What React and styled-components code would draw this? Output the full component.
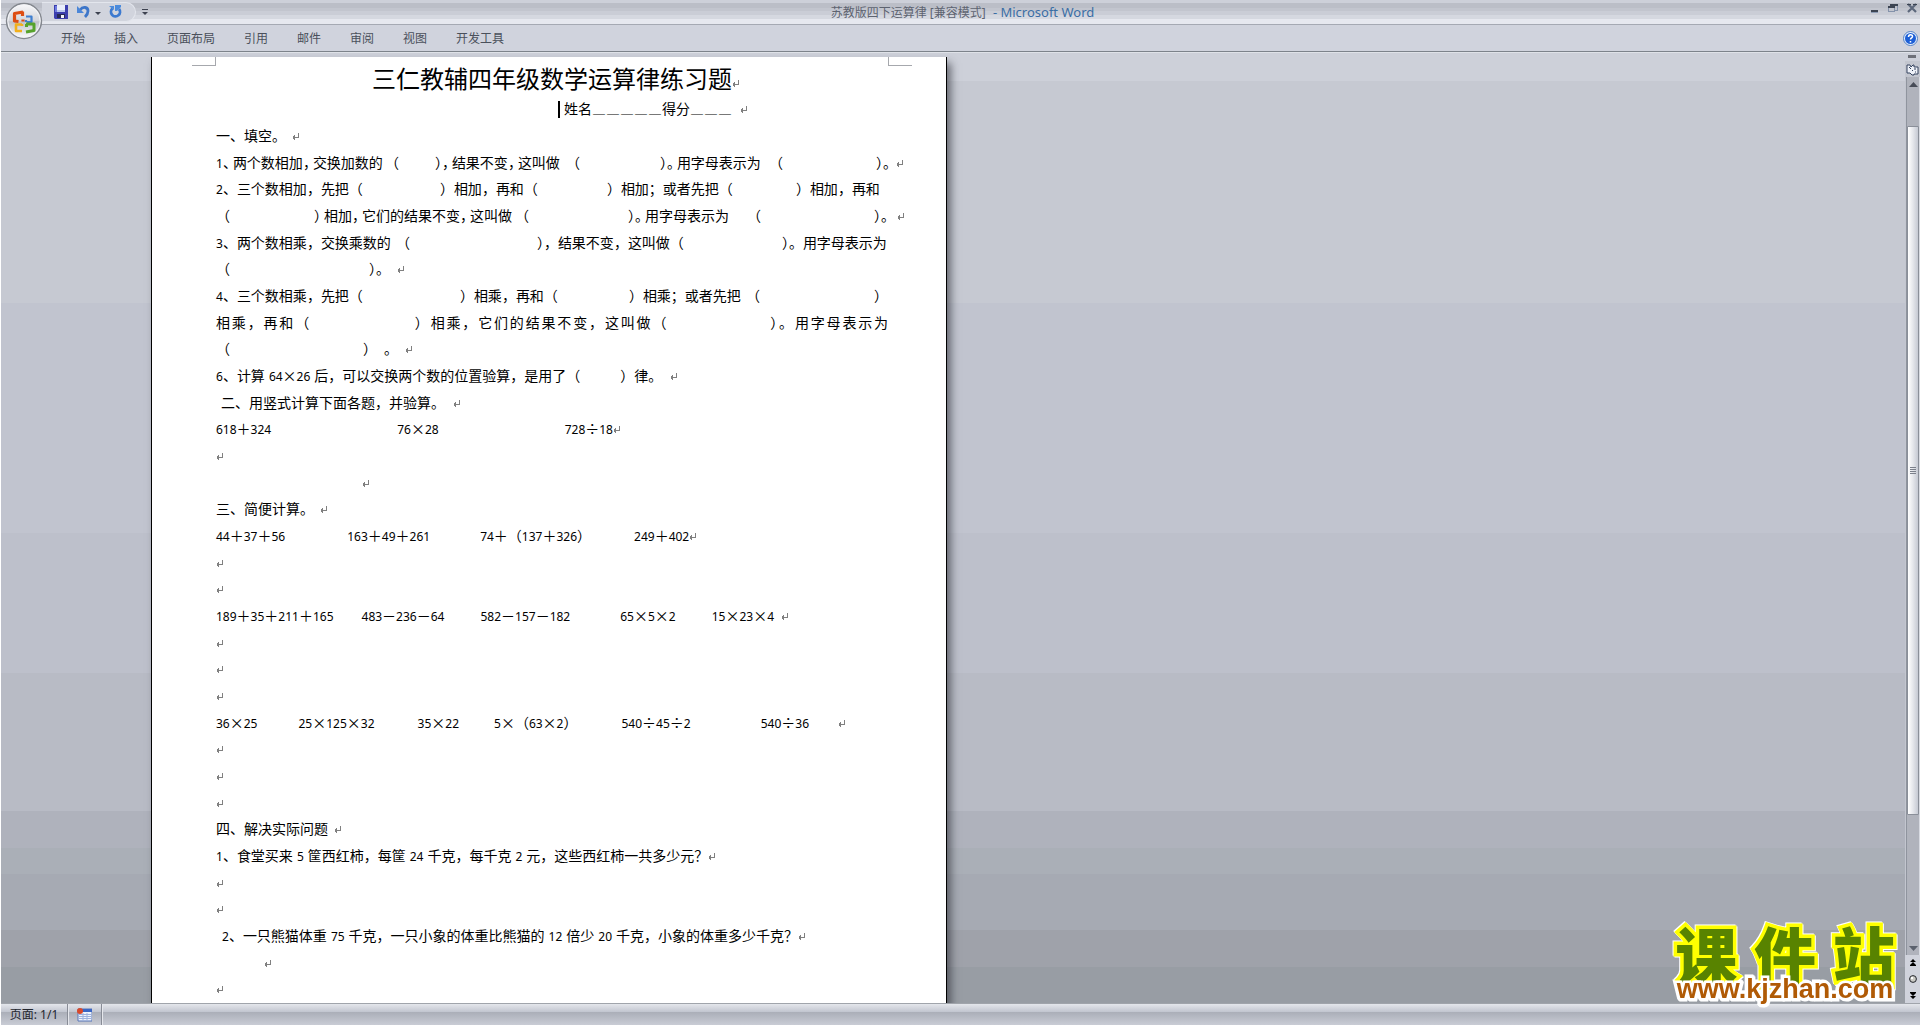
import styled, { createGlobalStyle, css } from "styled-components";

const GlobalStyle = createGlobalStyle`
  *, *::before, *::after {
    box-sizing: border-box;
  }

  body {
    margin: 0;
    overflow: hidden;
    background: #fff;
    font-family: "Noto Sans", "Noto Sans CJK SC", sans-serif;
    font-size: 12px;
  }

  button {
    border: none;
    background: none;
    padding: 0;
    font: inherit;
    color: inherit;
    display: flex;
    align-items: center;
    justify-content: center;
  }

  svg {
    display: block;
  }
`;

const Window = styled.div`
  height: 100vh;
  display: flex;
  flex-direction: column;
  border-left: 1px solid #fff;
  position: relative;
`;

/* ---------- title bar ---------- */

const TitleBar = styled.header`
  height: 25px;
  flex: none;
  display: grid;
  grid-template-columns: 1fr auto 1fr;
  align-items: start;
  border-bottom: 1px solid #a5a9b3;
  background: linear-gradient(
    #cdd0d9 0 3px,
    #bbbec7 3px 8px,
    #c2c5ce 8px 11px,
    #cacdd6 11px 15px,
    #d5d8e0 15px 19px,
    #e6e8ef 19px
  );
`;

const QuickAccess = styled.div`
  height: 23px;
  padding-left: 41px;
  display: flex;
  align-items: center;
`;

const Pill = styled.div`
  height: 20px;
  width: 94px;
  padding: 0 12px;
  display: flex;
  align-items: center;
  border: 1px solid #e3e6ed;
  border-left: none;
  border-radius: 0 10px 10px 0;
  background: #d1d4dd;

  button:nth-child(2) {
    margin-left: 9px;
  }

  button:nth-child(3) {
    margin-left: 5px;
  }

  button:nth-child(4) {
    margin-left: 8px;
  }
`;

const Customize = styled.button`
  margin-left: 6px;
`;

const WindowTitle = styled.div`
  padding-left: 4px;
  line-height: 24px;
  color: #5d6370;
  white-space: pre;

  span {
    margin-left: 4px;
    color: #3a6ea5;
    font-size: 13px;
  }
`;

const WindowButtons = styled.div`
  display: flex;
  justify-content: flex-end;
  gap: 9px;
  padding: 2px 3px 0 0;
`;

/* ---------- ribbon tabs ---------- */

const Orb = styled.button`
  position: absolute;
  left: 4px;
  top: 2px;
  z-index: 2;
`;

const TabBar = styled.nav`
  height: 27px;
  flex: none;
  display: flex;
  align-items: center;
  gap: 29px;
  padding: 0 2px 0 60px;
  background: #d0d3dd;
  border-bottom: 1px solid #7d838b;
  color: #4a505b;
`;

const HelpButton = styled.button`
  margin-left: auto;
`;

/* ---------- workspace ---------- */

const Workspace = styled.main`
  flex: 1;
  min-height: 0;
  display: flex;
  border-top: 1px solid #dfe2e8;
  background: linear-gradient(
    #cdd0d9 0 28px,
    #c6c9d2 28px 250px,
    #c1c4cf 250px 480px,
    #bdc0cb 480px 620px,
    #b8bbc5 620px 758px,
    #afb2bc 758px 795px,
    #aaafb7 795px 821px,
    #a6aab3 821px 877px,
    #9fa2aa 877px 914px,
    #989da4 914px
  );
`;

const Canvas = styled.div`
  flex: 1;
  min-width: 0;
  overflow: hidden;
  padding: 4px 0 0 150px;
`;

const Page = styled.article`
  width: 796px;
  height: 100%;
  background: #fff;
  border: solid #000;
  border-width: 0 1px;
  box-shadow: 4px 6px 8px rgba(40, 42, 50, 0.6);
  color: #000;
  overflow: hidden;
`;

const Corners = styled.div`
  display: flex;
  justify-content: space-between;
  padding: 0 34px 0 40px;
`;

const Corner = styled.i`
  width: 24px;
  height: 9px;
  border-bottom: 1px solid #a6a8ad;
  border-left: ${(p) => (p.$side === "right" ? "1px solid #a6a8ad" : "none")};
  border-right: ${(p) => (p.$side === "left" ? "1px solid #a6a8ad" : "none")};
`;

const Body = styled.div`
  padding: 0 58px 0 64px;
  font-family: "Noto Sans CJK SC", sans-serif;
  font-size: 14px;
  text-spacing-trim: space-all;
`;

const DocTitle = styled.h1`
  margin: 0;
  height: 29px;
  padding-left: 156px;
  font-size: 24px;
  font-weight: 400;
  line-height: 24px;
  white-space: nowrap;
`;

const Line = styled.p`
  margin: 0;
  height: 27px;
  line-height: 27px;
  white-space: nowrap;

  &:nth-of-type(3n) {
    height: 26px;
    line-height: 26px;
  }

  ${(p) =>
    p.$justify &&
    css`
      white-space: normal;
      text-align-last: justify;
    `}
`;

const Digits = styled.span`
  font-family: "Noto Sans", sans-serif;
  font-size: 12px;
`;

const Glyph = styled.span`
  display: inline-block;
  width: ${(p) => p.$w}px;
  text-align: ${(p) => (p.$center ? "center" : "left")};
  text-align-last: auto;
  font-size: ${(p) => (p.$rule ? 12 : 14)}px;
  font-weight: ${(p) => (p.$rule ? 700 : 400)};
  font-feature-settings: ${(p) => (p.$half ? '"halt"' : "normal")};
  line-height: 20px;
  white-space: nowrap;
`;

const Blank = styled.span`
  display: inline-block;
  width: ${(p) => p.$w}px;
`;

const Caret = styled.span`
  display: inline-block;
  width: 2px;
  height: 17px;
  margin-right: 4px;
  vertical-align: -4px;
  background: #000;
`;

const MarkIcon = styled.svg`
  display: inline-block;
  vertical-align: 0;
`;

/* ---------- scroll bar ---------- */

const ScrollBar = styled.aside`
  width: 15px;
  flex: none;
  display: flex;
  flex-direction: column;
  background: #c3c6cf;
`;

const Splitter = styled.div`
  height: 8px;
  padding: 2px 3px;
  background: #cdd0d9;

  &::before {
    content: "";
    display: block;
    width: 8px;
    height: 3px;
    background: #6d7078;
  }
`;

const RulerButton = styled.button`
  height: 16px;
`;

const Track = styled.div`
  flex: 1;
  margin-left: 1px;
  display: flex;
  flex-direction: column;
  border-left: 1px solid #8f949e;
  border-right: 1px solid #d8dbe2;
  background: #b0b3bc;

  & > button {
    height: 14px;
  }
`;

const Rail = styled.div`
  flex: 1;
  display: flex;
  flex-direction: column;
  padding: 35px 0 126px;
`;

const Thumb = styled.div`
  flex: 1;
  display: flex;
  align-items: center;
  justify-content: center;
  border: 1px solid #8a8f99;
  border-radius: 1px;
  background: linear-gradient(90deg, #fff, #e4e6eb 50%, #c5c9d3);
`;

const BrowseButtons = styled.div`
  height: 48px;
  display: flex;
  flex-direction: column;
  justify-content: space-around;
  align-items: center;
  background: #d0d3dc;
`;

/* ---------- status bar ---------- */

const StatusBar = styled.footer`
  height: 22px;
  flex: none;
  display: flex;
  align-items: stretch;
  border-top: 1px solid #a0a4ab;
  color: #23262e;
  background: linear-gradient(#e4e6eb, #c1c5cf 8px, #aaaeb8 8px, #c9ccd5);
`;

const StatusCell = styled.div`
  width: ${(p) => p.$w}px;
  display: flex;
  align-items: center;
  justify-content: center;
  line-height: 18px;
  border-right: 1px solid #888c96;
  box-shadow: 1px 0 #e5e7ec;
`;

/* ---------- watermark ---------- */

const Watermark = styled.div`
  position: absolute;
  right: 17px;
  bottom: 22px;
  width: 236px;
  font-weight: 900;
  text-align: center;
  paint-order: stroke fill;
  filter: drop-shadow(1px 1px 0 #fff) drop-shadow(-1px -1px 0 #fff);
`;

const SiteName = styled.div`
  display: flex;
  justify-content: space-around;
  font-family: "Noto Sans CJK SC", sans-serif;
  font-size: 62px;
  line-height: 44px;
  color: #588300;
  -webkit-text-stroke: 7px #ff0;
`;

const SiteUrl = styled.div`
  font-family: "Liberation Sans", sans-serif;
  font-size: 27px;
  line-height: 28px;
  color: #b05a05;
  -webkit-text-stroke: 5px #fff;
`;

/* Numbers are blanks in pixels, "¶" is a paragraph mark, "|" the caret. */
const lines = [
  { parts: [342, "|", "姓名＿＿＿＿＿得分＿＿＿", 8, "¶"] },
  { parts: ["一、填空。", 6, "¶"] },
  {
    tight: true,
    parts: ["1、两个数相加，交换加数的", 2, "（", 36, "），结果不变，这叫做", 6, "（", 80, "）。用字母表示为", 8, "（", 93, "）。", 3, "¶"],
  },
  { parts: ["2、三个数相加，先把（", 77, "）相加，再和（", 69, "）相加；或者先把（", 63, "）相加，再和"] },
  {
    tight: true,
    parts: ["（", 84, "）相加，它们的结果不变，这叫做", 3, "（", 99, "）。用字母表示为", 18, "（", 113, "）。", 6, "¶"],
  },
  { parts: ["3、两个数相乘，交换乘数的", 5, "（", 127, "），结果不变，这叫做（", 98, "）。用字母表示为"] },
  { parts: ["（", 139, "）。", 7, "¶"] },
  { parts: ["4、三个数相乘，先把（", 97, "）相乘，再和（", 71, "）相乘；或者先把", 5, "（", 114, "）"] },
  { justify: true, parts: ["相乘，再和（", 102, "）相乘，它们的结果不变，这叫做（", 102, "）。用字母表示为"] },
  { parts: ["（", 133, "）", 7, "。", 7, "¶"] },
  { parts: ["6、计算", 4, "64×26", 4, "后，可以交换两个数的位置验算，是用了（", 40, "）律。", 8, "¶"] },
  { parts: [5, "二、用竖式计算下面各题，并验算。", 8, "¶"] },
  { parts: ["618＋324", 126, "76×28", 126, "728÷18¶"] },
  { parts: ["¶"] },
  { parts: [146, "¶"] },
  { parts: ["三、简便计算。", 6, "¶"] },
  { parts: ["44＋37＋56", 62, "163＋49＋261", 50, "74＋（137＋326）", 43, "249＋402¶"] },
  { parts: ["¶"] },
  { parts: ["¶"] },
  { parts: ["189＋35＋211＋165", 28, "483－236－64", 36, "582－157－182", 50, "65×5×2", 36, "15×23×4", 7, "¶"] },
  { parts: ["¶"] },
  { parts: ["¶"] },
  { parts: ["¶"] },
  { parts: ["36×25", 41, "25×125×32", 43, "35×22", 35, "5×（63×2）", 44, "540÷45÷2", 70, "540÷36", 29, "¶"] },
  { parts: ["¶"] },
  { parts: ["¶"] },
  { parts: ["¶"] },
  { parts: ["四、解决实际问题", 6, "¶"] },
  { parts: ["1、食堂买来", 4, "5", 4, "筐西红柿，每筐", 4, "24", 4, "千克，每千克", 4, "2", 4, "元，这些西红柿一共多少元？¶"] },
  { parts: ["¶"] },
  { parts: ["¶"] },
  { parts: [6, "2、一只熊猫体重", 4, "75", 4, "千克，一只小象的体重比熊猫的", 4, "12", 4, "倍少", 4, "20", 4, "千克，小象的体重多少千克？¶"] },
  { parts: [48, "¶"] },
  { parts: ["¶"] },
];

const tabs = ["开始", "插入", "页面布局", "引用", "邮件", "审阅", "视图", "开发工具"];

const Mark = () => (
  <MarkIcon width="8" height="8" viewBox="0 0 8 8" fill="none" stroke="#808080" shapeRendering="crispEdges" aria-hidden="true">
    <path d="M6.5 0v5M1 4.5h6M1.5 3v3M2.5 2v5" />
  </MarkIcon>
);

const renderText = (text, tight) =>
  text.split(/(\d+|[＋－×÷＿¶|]|）(?=[，。])|[，。、）])/).map((token, i) => {
    if (!token) return null;
    if (/^\d/.test(token)) return <Digits key={i}>{token}</Digits>;
    if (token === "¶") return <Mark key={i} />;
    if (token === "|") return <Caret key={i} />;
    if (token === "＿") return <Glyph key={i} $w={14} $center $rule>{token}</Glyph>;
    if (/[＋－×÷]/.test(token)) return <Glyph key={i} $w={14} $center>{token}</Glyph>;
    if (token === "）" && /）[，。]/.test(text)) return <Glyph key={i} $w={7} $half>{token}</Glyph>;
    if (tight && /[，。、）]/.test(token)) return <Glyph key={i} $w={10} $half>{token}</Glyph>;
    return token;
  });

const SaveIcon = () => (
  <svg width="14" height="14" viewBox="0 0 14 14">
    <path d="M0 0h14v14H1l-1-1z" fill="#3b3fae" />
    <path d="M1 1h2v6H1z" fill="#6f7be0" />
    <path d="M3 0h8v7H3z" fill="#e9eefa" />
    <path d="M3 5h8v2H3z" fill="#b9c8ee" />
    <path d="M3 9h8v4H3z" fill="#272a55" />
    <path d="M7 10h3v3H7z" fill="#f2f4fa" />
  </svg>
);

const UndoIcon = () => (
  <svg width="13" height="13" viewBox="0 0 13 13" fill="none">
    <path d="M3 5c3-4 8-3 8 1 0 2-1 4-3 6" stroke="#3d76c9" strokeWidth="2.8" />
    <path d="M0 1v7h7z" fill="#4b86d8" />
  </svg>
);

const RedoIcon = () => (
  <svg width="13" height="13" viewBox="0 0 13 13" fill="none">
    <path d="M3.500 3.500a4.500 4.500 0 1 0 6.500 .5" stroke="#3d7ad0" strokeWidth="2.800" />
    <path d="M6 0h6v2L8 6H6z" fill="#4b8bdc" />
    <path d="M0 1h5v4z" fill="#4b8bdc" />
  </svg>
);

const DownIcon = ({ color = "#3d4250", bar }) => (
  <svg width="6" height="8" viewBox="0 0 6 8" fill={color}>
    {bar && <path d="M0 1h6v1H0z" />}
    <path d="M0 4h6L3 7z" />
  </svg>
);

const OrbIcon = () => (
  <svg width="38" height="38" viewBox="0 0 38 38">
    <defs>
      <linearGradient id="orb" x1="0" y1="0" x2="0" y2="1">
        <stop offset="0" stopColor="#fafafc" />
        <stop offset=".5" stopColor="#d3d5da" />
        <stop offset=".52" stopColor="#bfc2ca" />
        <stop offset="1" stopColor="#fdfdfe" />
      </linearGradient>
    </defs>
    <circle cx="19" cy="19" r="17.5" fill="url(#orb)" stroke="#84888f" strokeWidth="1.4" />
    <circle cx="19" cy="19" r="16.2" fill="none" stroke="#f4f5f8" />
    <g fill="none" strokeLinejoin="round">
      <path d="M18 10L9.500 11.500V19l4 .5M17.500 9.500V14M18 17.500v2" stroke="#dd4d12" strokeWidth="3.200" />
      <path d="M21 14.500h5.500V20H22M21 18v2" stroke="#3f7fd0" strokeWidth="2.200" />
      <path d="M17 22.500h-6V29h6M17 22v2" stroke="#f2b01c" strokeWidth="2.600" />
      <path d="M21 22h8V28.500L21 30M21.500 22v3" stroke="#57a32c" strokeWidth="3" />
    </g>
  </svg>
);

const HelpIcon = () => (
  <svg width="15" height="15" viewBox="0 0 15 15">
    <circle cx="7.500" cy="7.500" r="7" fill="#e8f0fc" stroke="#5481c4" />
    <circle cx="7.500" cy="7.500" r="5.500" fill="#1d5fd6" />
    <path d="M5.500 6c0-3 4-3 4-.6 0 1.500-2 1.500-2 3.200M7.500 10v1.600" fill="none" stroke="#fff" strokeWidth="1.500" />
  </svg>
);

export default function App() {
  return (
    <>
      <GlobalStyle />
      <Window>
        <Orb aria-label="Office 按钮">
          <OrbIcon />
        </Orb>
        <TitleBar>
          <QuickAccess>
            <Pill>
              <button aria-label="保存"><SaveIcon /></button>
              <button aria-label="撤消"><UndoIcon /></button>
              <button aria-label="撤消列表"><DownIcon /></button>
              <button aria-label="重复"><RedoIcon /></button>
            </Pill>
            <Customize aria-label="自定义快速访问工具栏"><DownIcon bar /></Customize>
          </QuickAccess>
          <WindowTitle>
            苏教版四下运算律 [兼容模式] <span>- Microsoft Word</span>
          </WindowTitle>
          <WindowButtons>
            <button aria-label="最小化">
              <svg width="8" height="13" viewBox="0 0 8 13"><path d="M0 8h7v2H0z" fill="#3c4452" /><path d="M0 10h7v1H0z" fill="#8d9cb5" /></svg>
            </button>
            <button aria-label="还原">
              <svg width="10" height="13" viewBox="0 0 10 13" fill="none" shapeRendering="crispEdges">
                <path d="M3 4V2.500h6V8H7M.5 5v4.500h6V5" stroke="#8593ab" />
                <path d="M2 2.500h8M0 5h7" stroke="#3c4452" strokeWidth="2" />
              </svg>
            </button>
            <button aria-label="关闭">
              <svg width="10" height="13" viewBox="0 0 10 13" fill="none">
                <path d="M1 2l8 8M9 2l-8 8" stroke="#5c677b" strokeWidth="2.200" />
                <path d="M0 2.500h4M6 2.500h4" stroke="#3c4452" />
              </svg>
            </button>
          </WindowButtons>
        </TitleBar>
        <TabBar>
          {tabs.map((tab) => (
            <button key={tab}>{tab}</button>
          ))}
          <HelpButton aria-label="帮助"><HelpIcon /></HelpButton>
        </TabBar>

        <Workspace>
          <Canvas>
            <Page>
              <Corners>
                <Corner $side="left" />
                <Corner $side="right" />
              </Corners>
              <Body>
                <DocTitle>三仁教辅四年级数学运算律练习题<Mark /></DocTitle>
                {lines.map(({ parts, tight, justify }, i) => (
                  <Line key={i} $justify={justify}>
                    {parts.map((part, j) =>
                      typeof part === "number" ? (
                        <Blank key={j} $w={part} />
                      ) : (
                        <span key={j}>{renderText(part, tight)}</span>
                      )
                    )}
                  </Line>
                ))}
              </Body>
            </Page>
          </Canvas>
          <ScrollBar>
            <Splitter />
            <RulerButton aria-label="标尺">
              <svg width="13" height="13" viewBox="0 0 13 13">
                <path d="M1 2h3l1 2 2-2h1v2h4v7H8v1H6l-2-2H1z" fill="#eef1f8" stroke="#34435e" />
                <path d="M3 4l2 2M6 7l1 1M9 5v2M9 9h1" stroke="#34435e" />
              </svg>
            </RulerButton>
            <Track>
              <button aria-label="向上滚动">
                <svg width="9" height="5" viewBox="0 0 9 5"><path d="M0 5h9L4.500 0z" fill="#474c57" /></svg>
              </button>
              <Rail>
                <Thumb>
                  <svg width="6" height="7" viewBox="0 0 6 7" stroke="#7b808b"><path d="M0 .5h6M0 2.500h6M0 4.500h6M0 6.500h6" /></svg>
                </Thumb>
              </Rail>
              <button aria-label="向下滚动">
                <svg width="9" height="5" viewBox="0 0 9 5"><path d="M0 0h9L4.500 5z" fill="#5b616d" /></svg>
              </button>
            </Track>
            <BrowseButtons>
              <button aria-label="前一页">
                <svg width="6" height="7" viewBox="0 0 6 7"><path d="M3 0l3 3H0zM3 3l3 3H0zM0 6h6v1H0z" /></svg>
              </button>
              <button aria-label="选择浏览对象">
                <svg width="8" height="8" viewBox="0 0 8 8"><circle cx="4" cy="4" r="3.400" fill="#c9c9c4" stroke="#22252b" /><circle cx="3" cy="3" r="1.200" fill="#fff" /></svg>
              </button>
              <button aria-label="下一页">
                <svg width="6" height="7" viewBox="0 0 6 7"><path d="M0 0h6v1H0zM0 1h6L3 4zM0 4h6L3 7z" /></svg>
              </button>
            </BrowseButtons>
          </ScrollBar>
        </Workspace>

        <StatusBar>
          <StatusCell $w={67}>页面: 1/1</StatusCell>
          <StatusCell $w={34}>
            <svg width="15" height="14" viewBox="0 0 15 14">
              <path d="M1 1h14v12H1z" fill="#eef3fc" stroke="#5674b8" />
              <path d="M1 1h14v3H1z" fill="#3a66c4" />
              <path d="M2 6.500h12M2 8.500h12M2 10.500h12M6 5v8M10 5v8" stroke="#9db2de" />
              <circle cx="3" cy="3" r="3" fill="#d9492b" />
            </svg>
          </StatusCell>
        </StatusBar>

        <Watermark>
          <SiteName>
            <span>课</span>
            <span>件</span>
            <span>站</span>
          </SiteName>
          <SiteUrl>www.kjzhan.com</SiteUrl>
        </Watermark>
      </Window>
    </>
  );
}
